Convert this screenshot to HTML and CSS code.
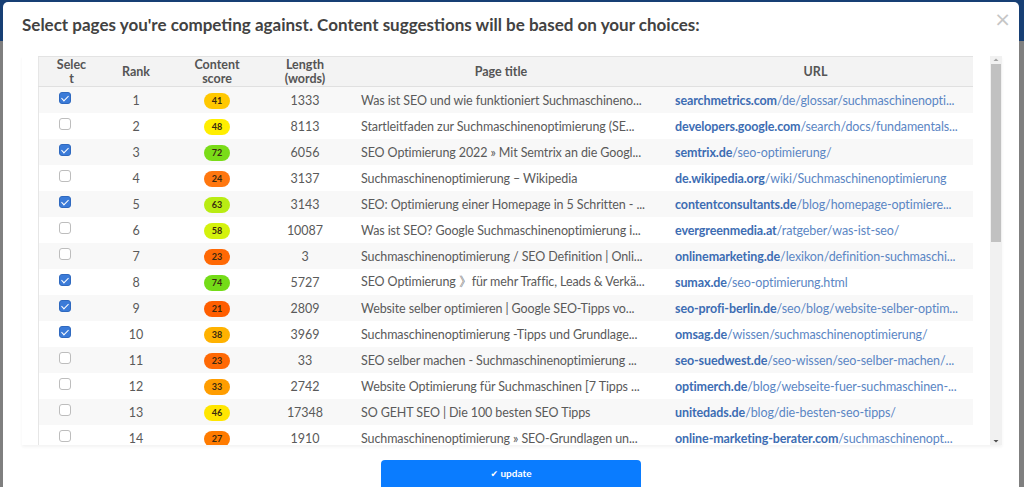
FILE: index.html
```html
<!DOCTYPE html>
<html lang="en">
<head>
  <meta charset="UTF-8">
  <meta name="viewport" content="width=device-width, initial-scale=1.0">
  <link rel="stylesheet" href="styles.css">
</head>
<body>

<div class="modal">
  <div class="modal-head">
    <h2 class="modal-title">Select pages you're competing against. Content suggestions will be based on your choices:</h2>
    <button class="close-btn">×</button>
  </div>

  <div class="scroll-area">
    <div class="table-wrap">
      <table class="pages">
        <thead>
          <tr>
            <th class="col-select"><span class="select-label">Select</span></th>
            <th class="col-rank">Rank</th>
            <th class="col-score">Content<br>score</th>
            <th class="col-length">Length<br>(words)</th>
            <th class="col-title">Page title</th>
            <th class="col-url">URL</th>
          </tr>
        </thead>
        <tbody>
          <tr>
            <td class="cell-check"><input type="checkbox" checked></td>
            <td>1</td>
            <td><span class="score" style="background:hsl(47,100%,50%)">41</span></td>
            <td>1333</td>
            <td class="cell-title">Was ist SEO und wie funktioniert Suchmaschineno...</td>
            <td class="cell-url"><b>searchmetrics.com</b>/de/glossar/suchmaschinenopti...</td>
          </tr>
          <tr>
            <td class="cell-check"><input type="checkbox"></td>
            <td>2</td>
            <td><span class="score" style="background:hsl(56,100%,50%)">48</span></td>
            <td>8113</td>
            <td class="cell-title">Startleitfaden zur Suchmaschinenoptimierung (SE...</td>
            <td class="cell-url"><b>developers.google.com</b>/search/docs/fundamentals...</td>
          </tr>
          <tr>
            <td class="cell-check"><input type="checkbox" checked></td>
            <td>3</td>
            <td><span class="score" style="background:hsl(90,80%,48%)">72</span></td>
            <td>6056</td>
            <td class="cell-title">SEO Optimierung 2022 » Mit Semtrix an die Googl...</td>
            <td class="cell-url"><b>semtrix.de</b>/seo-optimierung/</td>
          </tr>
          <tr>
            <td class="cell-check"><input type="checkbox"></td>
            <td>4</td>
            <td><span class="score" style="background:hsl(26,100%,53%)">24</span></td>
            <td>3137</td>
            <td class="cell-title">Suchmaschinenoptimierung – Wikipedia</td>
            <td class="cell-url"><b>de.wikipedia.org</b>/wiki/Suchmaschinenoptimierung</td>
          </tr>
          <tr>
            <td class="cell-check"><input type="checkbox" checked></td>
            <td>5</td>
            <td><span class="score" style="background:hsl(74,85%,50%)">63</span></td>
            <td>3143</td>
            <td class="cell-title">SEO: Optimierung einer Homepage in 5 Schritten - ...</td>
            <td class="cell-url"><b>contentconsultants.de</b>/blog/homepage-optimiere...</td>
          </tr>
          <tr>
            <td class="cell-check"><input type="checkbox"></td>
            <td>6</td>
            <td><span class="score" style="background:hsl(68,90%,50%)">58</span></td>
            <td>10087</td>
            <td class="cell-title">Was ist SEO? Google Suchmaschinenoptimierung i...</td>
            <td class="cell-url"><b>evergreenmedia.at</b>/ratgeber/was-ist-seo/</td>
          </tr>
          <tr>
            <td class="cell-check"><input type="checkbox"></td>
            <td>7</td>
            <td><span class="score" style="background:hsl(24,100%,51%)">23</span></td>
            <td>3</td>
            <td class="cell-title">Suchmaschinenoptimierung / SEO Definition | Onli...</td>
            <td class="cell-url"><b>onlinemarketing.de</b>/lexikon/definition-suchmaschi...</td>
          </tr>
          <tr>
            <td class="cell-check"><input type="checkbox" checked></td>
            <td>8</td>
            <td><span class="score" style="background:hsl(92,80%,48%)">74</span></td>
            <td>5727</td>
            <td class="cell-title">SEO Optimierung 》für mehr Traffic, Leads &amp; Verkä...</td>
            <td class="cell-url"><b>sumax.de</b>/seo-optimierung.html</td>
          </tr>
          <tr>
            <td class="cell-check"><input type="checkbox" checked></td>
            <td>9</td>
            <td><span class="score" style="background:hsl(22,100%,50%)">21</span></td>
            <td>2809</td>
            <td class="cell-title">Website selber optimieren | Google SEO-Tipps vo...</td>
            <td class="cell-url"><b>seo-profi-berlin.de</b>/seo/blog/website-selber-optim...</td>
          </tr>
          <tr>
            <td class="cell-check"><input type="checkbox" checked></td>
            <td>10</td>
            <td><span class="score" style="background:hsl(42,100%,50%)">38</span></td>
            <td>3969</td>
            <td class="cell-title">Suchmaschinenoptimierung -Tipps und Grundlage...</td>
            <td class="cell-url"><b>omsag.de</b>/wissen/suchmaschinenoptimierung/</td>
          </tr>
          <tr>
            <td class="cell-check"><input type="checkbox"></td>
            <td>11</td>
            <td><span class="score" style="background:hsl(24,100%,51%)">23</span></td>
            <td>33</td>
            <td class="cell-title">SEO selber machen - Suchmaschinenoptimierung ...</td>
            <td class="cell-url"><b>seo-suedwest.de</b>/seo-wissen/seo-selber-machen/...</td>
          </tr>
          <tr>
            <td class="cell-check"><input type="checkbox"></td>
            <td>12</td>
            <td><span class="score" style="background:hsl(37,100%,50%)">33</span></td>
            <td>2742</td>
            <td class="cell-title">Website Optimierung für Suchmaschinen [7 Tipps ...</td>
            <td class="cell-url"><b>optimerch.de</b>/blog/webseite-fuer-suchmaschinen-...</td>
          </tr>
          <tr>
            <td class="cell-check"><input type="checkbox"></td>
            <td>13</td>
            <td><span class="score" style="background:hsl(54,100%,50%)">46</span></td>
            <td>17348</td>
            <td class="cell-title">SO GEHT SEO | Die 100 besten SEO Tipps</td>
            <td class="cell-url"><b>unitedads.de</b>/blog/die-besten-seo-tipps/</td>
          </tr>
          <tr>
            <td class="cell-check"><input type="checkbox"></td>
            <td>14</td>
            <td><span class="score" style="background:hsl(29,100%,50%)">27</span></td>
            <td>1910</td>
            <td class="cell-title">Suchmaschinenoptimierung » SEO-Grundlagen un...</td>
            <td class="cell-url"><b>online-marketing-berater.com</b>/suchmaschinenopt...</td>
          </tr>
        </tbody>
      </table>
    </div>

    <!-- scrollbar of the results list -->
    <div class="scrollbar">
      <svg class="sb-arrow" width="12" height="8" viewBox="0 0 12 8"><path d="M3.5 5 L6 2.5 L8.5 5 Z" fill="#a3a3a3"/></svg>
      <div class="sb-track"><div class="sb-thumb"></div></div>
      <svg class="sb-arrow" width="12" height="8" viewBox="0 0 12 8"><path d="M3.5 3 L6 5.5 L8.5 3 Z" fill="#505050"/></svg>
    </div>
  </div>

  <div class="modal-foot">
    <button class="update-btn"><span class="tick">✔</span> update</button>
  </div>
</div>

</body>
</html>
```

FILE: styles.css
```css
body {
  font-family: 'Lato', 'Open Sans', sans-serif;
  margin: 0;
  height: 487px;
  overflow: hidden;
  background: linear-gradient(to bottom, #173f74 0, #173f74 41px, #7f7f7f 41px);
}

.modal {
  margin: 2px 5px 0 3px;
  height: 485px;
  background-color: #fff;
  border-radius: 5px 5px 0 0;
  display: flex;
  flex-direction: column;
}

.modal > * {
  flex-shrink: 0;
}

.modal-head {
  display: flex;
  justify-content: space-between;
  align-items: flex-start;
  padding: 12px 8px 0 19px;
  height: 42px;
}

.modal-title {
  margin: 0;
  font-size: 17px;
  font-weight: 700;
  color: #424242;
  line-height: 22px;
}

.close-btn {
  background: none;
  border: none;
  padding: 0;
  margin-top: -5px;
  font-family: 'DejaVu Sans', sans-serif;
  font-size: 20px;
  line-height: 20px;
  color: #c6c6c6;
  cursor: pointer;
}

/* table + scrollbar */
.scroll-area {
  display: flex;
  margin: 0 17px 0 19px;
  height: 389px;
  box-shadow: 0 2px 3px rgba(0, 0, 0, 0.05);
}

.table-wrap {
  flex: 1;
  overflow: hidden;
  padding: 0 17px 0 16px;
}

.pages {
  width: 934px;
  border-collapse: collapse;
  table-layout: fixed;
  font-size: 12.5px;
  color: #5a5a5a;
  border-left: 1px solid #e6e6e6;
}

.pages th {
  background-color: #f3f3f3;
  border-top: 1px solid #e3e3e3;
  border-bottom: 1px solid #e0e0e0;
  font-weight: 700;
  font-size: 12.5px;
  color: #555;
  height: 29px;
  line-height: 14px;
  padding: 0;
  text-align: center;
}

.col-select { width: 65px; }
.col-rank { width: 64px; }
.col-score { width: 98px; }
.col-length { width: 78px; }
.col-title { width: 314px; }
.col-url { width: 315px; }

.select-label {
  display: inline-block;
  width: 32px;
  word-break: break-all;
}

.pages td {
  height: 26px;
  padding: 0;
  text-align: center;
  white-space: nowrap;
  overflow: hidden;
}

.pages tbody tr:nth-child(odd) {
  background-color: #f8f8f8;
}

.pages td.cell-check {
  text-align: left;
  padding-left: 20px;
}

.pages td.cell-title,
.pages td.cell-url {
  text-align: left;
  padding-left: 17px;
  letter-spacing: -0.1px;
}

.cell-url {
  color: #5b86c4;
}

.cell-url b {
  color: #3d6db3;
  font-weight: 700;
}

.pages input[type="checkbox"] {
  appearance: none;
  -webkit-appearance: none;
  width: 12px;
  height: 12px;
  margin: 0 0 4px 0;
  vertical-align: middle;
  border: 1px solid #bdbdbd;
  border-radius: 3px;
  background-color: #fff;
  position: relative;
}

.pages input[type="checkbox"]:checked {
  background-color: #3b7bd8;
  border-color: #2f69bf;
}

.pages input[type="checkbox"]:checked::after {
  content: '';
  position: absolute;
  left: 3px;
  top: 1px;
  width: 3px;
  height: 6px;
  border: solid #fff;
  border-width: 0 1.5px 1.5px 0;
  transform: rotate(45deg);
}

.score {
  display: inline-block;
  width: 26px;
  height: 16px;
  line-height: 16px;
  border-radius: 8px;
  font-size: 9px;
  font-weight: 700;
  color: #3a2a10;
  letter-spacing: 0;
}

/* fake scrollbar */
.scrollbar {
  width: 12px;
  background-color: #f1f1f1;
  display: flex;
  flex-direction: column;
}

.sb-arrow {
  display: block;
  flex: none;
}

.sb-track {
  flex: 1;
  padding: 0 1px;
}

.sb-thumb {
  height: 178px;
  background-color: #c1c1c1;
}

.modal-foot {
  display: flex;
  justify-content: center;
  padding-top: 15px;
}

.update-btn {
  width: 260px;
  height: 34px;
  border: none;
  border-radius: 4px;
  background-color: #0a7cff;
  color: #fff;
  font-family: 'Lato', sans-serif;
  font-weight: 700;
  font-size: 10px;
  padding-bottom: 9px;
}

.tick {
  font-family: 'DejaVu Sans', sans-serif;
  font-size: 9px;
}
```
